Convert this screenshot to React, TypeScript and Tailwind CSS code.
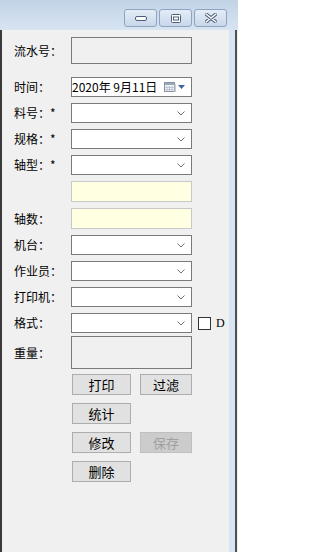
import React from 'react';

const font = { fontFamily: '"Noto Sans CJK SC", "Liberation Sans", sans-serif' };

function Chevron() {
  return (
    <svg width="8" height="5" viewBox="0 0 8 5" className="mr-[6px] shrink-0">
      <path d="M0.5 0.5 L4 4 L7.5 0.5" fill="none" stroke="#707070" strokeWidth="1" />
    </svg>
  );
}

function Combo() {
  return (
    <div className="w-[121px] h-[20px] border border-[#7a7a7a] bg-white flex items-center justify-end">
      <Chevron />
    </div>
  );
}

function Row({ label, children, className = '' }: { label: string; children: React.ReactNode; className?: string }) {
  return (
    <div className={`flex items-center ${className}`}>
      <div className="w-[57px] text-[12px] leading-none text-black whitespace-nowrap">{label}</div>
      {children}
    </div>
  );
}

function Btn({ label, width, disabled = false }: { label: string; width: string; disabled?: boolean }) {
  return (
    <div
      className={`${width} h-[21px] border flex items-center justify-center text-[13px] leading-none ${
        disabled ? 'bg-[#cccccc] border-[#bfbfbf] text-[#a0a0a0]' : 'bg-[#e1e1e1] border-[#adadad] text-black'
      }`}
    >
      {label}
    </div>
  );
}

function TitleButton({ children }: { children: React.ReactNode }) {
  return (
    <div className="w-[33px] h-[18px] rounded-[3px] border border-[#8ea3bf] bg-gradient-to-b from-[#e4edf7] to-[#c8d7ea] flex items-center justify-center">
      {children}
    </div>
  );
}

export default function App() {
  return (
    <div className="w-[238px] h-[552px] flex flex-col bg-[#d6e4f3] overflow-hidden" style={font}>
      {/* title bar */}
      <div className="h-[30px] shrink-0 flex justify-end items-start pt-[9px] pr-[11px] gap-[2px] bg-gradient-to-b from-[#c2d3e7] to-[#d7e4f2]">
        <TitleButton>
          <svg width="12" height="5" viewBox="0 0 12 5">
            <rect x="0.5" y="0.5" width="11" height="4" rx="1.5" fill="#fff" stroke="#4d5f78" />
          </svg>
        </TitleButton>
        <TitleButton>
          <svg width="10" height="9" viewBox="0 0 10 9">
            <rect x="0.5" y="0.5" width="9" height="8" rx="1" fill="#fff" stroke="#4d5f78" />
            <rect x="2.5" y="3" width="5" height="3" fill="none" stroke="#4d5f78" />
          </svg>
        </TitleButton>
        <TitleButton>
          <svg width="12" height="10" viewBox="0 0 12 10">
            <path d="M1 1 L11 9 M11 1 L1 9" stroke="#4d5f78" strokeWidth="3.4" strokeLinecap="round" />
            <path d="M1 1 L11 9 M11 1 L1 9" stroke="#fff" strokeWidth="1.6" strokeLinecap="round" />
          </svg>
        </TitleButton>
      </div>

      <div className="flex flex-1">
        <div className="w-[2px] bg-[#3a3a3a]" />
        <div className="w-[227px] bg-[#f0f0f0] pl-[12px] pt-[7px] flex flex-col">
          <Row label="流水号：">
            <div className="w-[121px] h-[27px] border border-[#7a7a7a] bg-[#f0f0f0]" />
          </Row>

          <Row label="时间：" className="mt-[13px]">
            <div className="w-[121px] h-[20px] border border-[#7a7a7a] bg-white flex items-center">
              <span className="text-[12px] leading-none text-black whitespace-nowrap">2020年 9月11日</span>
              <div className="flex-1" />
              <svg width="12" height="10" viewBox="0 0 12 10" className="shrink-0">
                <rect x="0.5" y="0.5" width="10" height="9" fill="#eef1f6" stroke="#8a94a6" />
                <rect x="1" y="1" width="9" height="2" fill="#9aa6ba" />
                <path d="M3 4 V9 M5.5 4 V9 M8 4 V9 M1 5.5 H10 M1 7.5 H10" stroke="#b8c0cf" strokeWidth="0.8" />
                <rect x="10.5" y="2" width="1.5" height="8" fill="#c8ccd3" />
              </svg>
              <svg width="7" height="4" viewBox="0 0 7 4" className="ml-[2px] mr-[6px] shrink-0">
                <path d="M0 0 H7 L3.5 4 Z" fill="#3f64a0" />
              </svg>
            </div>
          </Row>

          <Row label="料号：*" className="mt-[6px]">
            <Combo />
          </Row>
          <Row label="规格：*" className="mt-[6px]">
            <Combo />
          </Row>
          <Row label="轴型：*" className="mt-[6px]">
            <Combo />
          </Row>
          <Row label="" className="mt-[6px]">
            <div className="w-[121px] h-[21px] border border-[#c8c8c8] bg-[#ffffe1]" />
          </Row>
          <Row label="轴数：" className="mt-[6px]">
            <div className="w-[121px] h-[21px] border border-[#c8c8c8] bg-[#ffffe1]" />
          </Row>
          <Row label="机台：" className="mt-[6px]">
            <Combo />
          </Row>
          <Row label="作业员：" className="mt-[6px]">
            <Combo />
          </Row>
          <Row label="打印机：" className="mt-[6px]">
            <Combo />
          </Row>
          <Row label="格式：" className="mt-[6px]">
            <Combo />
            <div className="ml-[6px] w-[13px] h-[13px] border border-[#333333] bg-white" />
            <span
              className="ml-[5px] text-[12px] leading-none text-black"
              style={{ fontFamily: '"Liberation Serif", serif' }}
            >
              D
            </span>
          </Row>
          <Row label="重量：" className="mt-[3px]">
            <div className="w-[121px] h-[33px] border border-[#7a7a7a] bg-[#f0f0f0]" />
          </Row>

          <div className="pl-[58px] mt-[5px] flex flex-col gap-[8px]">
            <div className="flex gap-[9px]">
              <Btn label="打印" width="w-[59px]" />
              <Btn label="过滤" width="w-[52px]" />
            </div>
            <div className="flex gap-[9px]">
              <Btn label="统计" width="w-[59px]" />
            </div>
            <div className="flex gap-[9px]">
              <Btn label="修改" width="w-[59px]" />
              <Btn label="保存" width="w-[52px]" disabled />
            </div>
            <div className="flex gap-[9px]">
              <Btn label="删除" width="w-[59px]" />
            </div>
          </div>
        </div>
        <div className="w-[6px] bg-[#d6e4f3]" />
        <div className="w-[2px] bg-[#505050]" />
        <div className="w-[1px] bg-[#f0f0f0]" />
      </div>
    </div>
  );
}
